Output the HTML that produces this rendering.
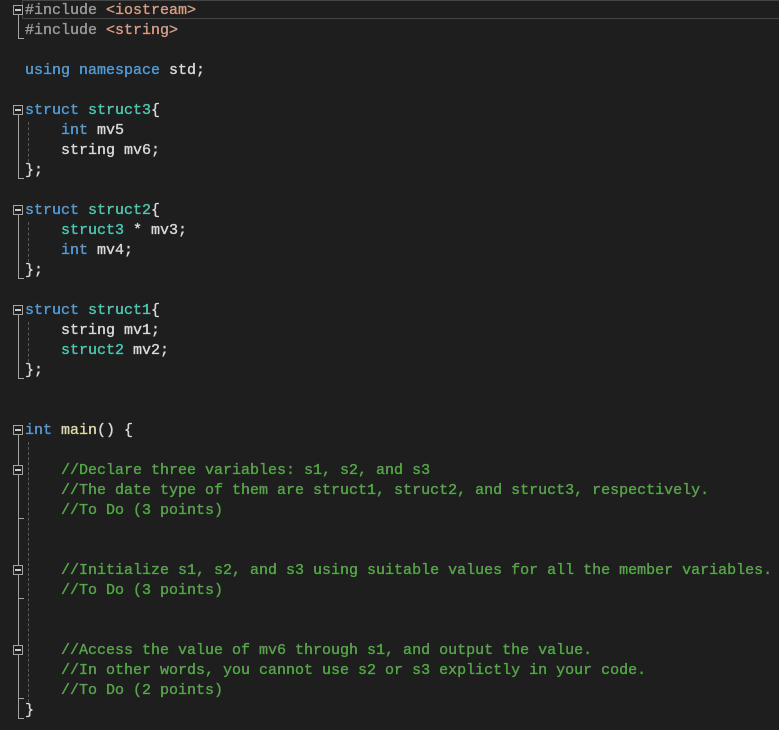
<!DOCTYPE html>
<html><head><meta charset="utf-8"><style>
body{margin:0;background:#1e1e1e;width:779px;height:730px;overflow:hidden;position:relative;font-family:"Liberation Mono","DejaVu Sans Mono",monospace;}
.l{position:absolute;left:25px;height:20px;line-height:20px;font-size:15px;white-space:pre;color:#dadada;margin-top:2px;-webkit-text-stroke:0.35px currentColor;}
.k{color:#569cd6}.t{color:#4ec9b0}.p{color:#9b9b9b}.s{color:#d69d85}.c{color:#57a64a}.f{color:#dcdcaa}
.box{position:absolute;left:13px;width:8px;height:8px;border:1px solid #a5a5a5;background:#1e1e1e}
.box:after{content:"";position:absolute;left:1px;top:3px;width:6px;height:2px;background:#c8c8c8}
.v{position:absolute;left:18px;width:1px;background:#a5a5a5}
.h{position:absolute;left:18px;width:6px;height:1px;background:#a5a5a5}
.d{position:absolute;left:28px;width:0;border-left:1px dashed #5a5a5a}
.cur{position:absolute;left:22px;top:0;width:760px;height:17px;border:1px solid #464646}
</style></head><body>
<div class="cur"></div>
<div class="l" style="top:-1px"><span class="p">#include</span> <span class="s">&lt;iostream&gt;</span></div>
<div class="l" style="top:19px"><span class="p">#include</span> <span class="s">&lt;string&gt;</span></div>
<div class="l" style="top:59px"><span class="k">using</span> <span class="k">namespace</span> std;</div>
<div class="l" style="top:99px"><span class="k">struct</span> <span class="t">struct3</span>{</div>
<div class="l" style="top:119px">    <span class="k">int</span> mv5</div>
<div class="l" style="top:139px">    string mv6;</div>
<div class="l" style="top:159px">};</div>
<div class="l" style="top:199px"><span class="k">struct</span> <span class="t">struct2</span>{</div>
<div class="l" style="top:219px">    <span class="t">struct3</span> * mv3;</div>
<div class="l" style="top:239px">    <span class="k">int</span> mv4;</div>
<div class="l" style="top:259px">};</div>
<div class="l" style="top:299px"><span class="k">struct</span> <span class="t">struct1</span>{</div>
<div class="l" style="top:319px">    string mv1;</div>
<div class="l" style="top:339px">    <span class="t">struct2</span> mv2;</div>
<div class="l" style="top:359px">};</div>
<div class="l" style="top:419px"><span class="k">int</span> <span class="f">main</span>() {</div>
<div class="l c" style="top:459px">    //Declare three variables: s1, s2, and s3</div>
<div class="l c" style="top:479px">    //The date type of them are struct1, struct2, and struct3, respectively.</div>
<div class="l c" style="top:499px">    //To Do (3 points)</div>
<div class="l c" style="top:559px">    //Initialize s1, s2, and s3 using suitable values for all the member variables.</div>
<div class="l c" style="top:579px">    //To Do (3 points)</div>
<div class="l c" style="top:639px">    //Access the value of mv6 through s1, and output the value.</div>
<div class="l c" style="top:659px">    //In other words, you cannot use s2 or s3 explictly in your code.</div>
<div class="l c" style="top:679px">    //To Do (2 points)</div>
<div class="l" style="top:699px">}</div>

<div class="box" style="top:5px"></div><div class="v" style="top:15px;height:23px"></div><div class="h" style="top:38px"></div>
<div class="box" style="top:105px"></div><div class="v" style="top:115px;height:63px"></div><div class="h" style="top:178px"></div><div class="d" style="top:122px;height:40px"></div>
<div class="box" style="top:205px"></div><div class="v" style="top:215px;height:63px"></div><div class="h" style="top:278px"></div><div class="d" style="top:222px;height:40px"></div>
<div class="box" style="top:305px"></div><div class="v" style="top:315px;height:63px"></div><div class="h" style="top:378px"></div><div class="d" style="top:322px;height:40px"></div>
<div class="box" style="top:425px"></div><div class="v" style="top:435px;height:283px"></div><div class="h" style="top:718px"></div><div class="d" style="top:442px;height:260px"></div>
<div class="box" style="top:465px"></div><div class="h" style="top:518px"></div>
<div class="box" style="top:565px"></div><div class="h" style="top:598px"></div>
<div class="box" style="top:645px"></div><div class="h" style="top:698px"></div>
</body></html>
